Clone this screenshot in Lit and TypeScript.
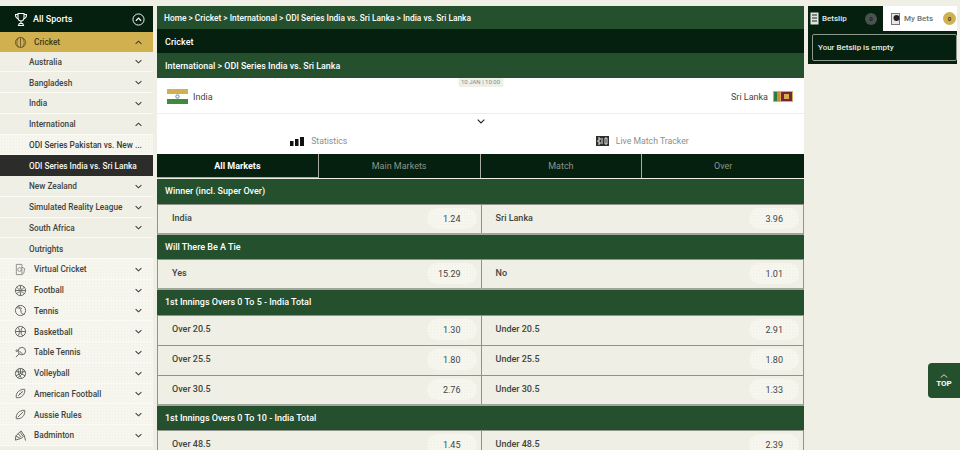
import { LitElement, html, css, svg } from "lit";
import { customElement } from "lit/decorators.js";

const chevDown = html`<svg class="chev" viewBox="0 0 8 5" width="7" height="5"><path d="M.7.8 4 4l3.300-3.200" fill="none" stroke="#3c3f3c" stroke-width="1.200"/></svg>`;
const chevUp = html`<svg class="chev" viewBox="0 0 8 5" width="7" height="5"><path d="M.7 4.200 4 1l3.300 3.200" fill="none" stroke="#3c3f3c" stroke-width="1.200"/></svg>`;

const ic = (body: unknown) => html`<svg class="sport" viewBox="0 0 14 14" width="13" height="13" fill="none" stroke="#5b605a" stroke-width="1">${body}</svg>`;
const icons: Record<string, unknown> = {
  cricket: svg`<circle cx="7" cy="7" r="5.500" stroke="#6b5a2c"/><path d="M7 1.500v11M5 2a8 8 0 0 0 0 10M9 2a8 8 0 0 1 0 10" stroke="#6b5a2c"/>`,
  virtual: svg`<path d="M2.500 1.500h6v11h-6zM8.500 4.500l3 1.500-1 5-2 1.500" stroke="#8a8d85"/><circle cx="6" cy="7" r="2" stroke="#8a8d85"/>`,
  football: svg`<circle cx="7" cy="7" r="5.500"/><path d="M7 1.500v3.500M1.500 7H12.500M7 9v3.500M3 3.500 5 5.500h4l2-2M3 10.500 5 8.500h4l2 2"/>`,
  tennis: svg`<circle cx="7" cy="7" r="5.500"/><path d="M2.500 4c3 0 5 1 5 3.500s1.500 4 4 3.500M5 1.800c0 2 2 2.500 3.500 3"/>`,
  basketball: svg`<circle cx="7" cy="7" r="5.500"/><path d="M1.500 7h11M7 1.500v0M4 2.300c2.500 2.500 2.500 7 0 9.400M9.500 2.200a6 6 0 0 0-2 4.800 6 6 0 0 0 2 4.800"/>`,
  tabletennis: svg`<circle cx="8.500" cy="5.500" r="4"/><path d="M5.500 8.500 2 12M6 5.500l3 3"/><circle cx="3" cy="5" r=".9"/>`,
  volleyball: svg`<circle cx="7" cy="7" r="5.500"/><path d="M7 7V1.500M7 7l-5 2.500M7 7l5 2.500M4.500 2.200C4 5 5 8 8 11.800M9.500 2.200C10 5 9.500 8 4 11.500M2 5c3 0 6 1 10 0"/>`,
  american: svg`<path d="M2.500 11.500C1.500 7 5.500 2 11.500 2.500 12.500 7.500 8 12.500 2.500 11.500Z"/><path d="M4.500 9.500 9.500 4.500M6 6.500l1.500 1.500M7.500 5l1.500 1.500"/>`,
  aussie: svg`<path d="M2.500 11.500C1.500 7 5.500 2 11.500 2.500 12.500 7.500 8 12.500 2.500 11.500Z"/><path d="M4 10 10 4"/>`,
  badminton: svg`<path d="M2 7.500 7.500 2 11 7l-3.500 3.500ZM2 7.500 1.500 12l5-1.500M11 7l1.500 5.500"/><path d="M4.500 5l3.500 4M6.500 3.500l3 4"/>`,
};

const leagues: [string, "down" | "up" | "none", string?][] = [
  ["Australia", "down"], ["Bangladesh", "down"], ["India", "down"], ["International", "up"],
  ["ODI Series Pakistan vs. New ...", "none", "leaf"], ["ODI Series India vs. Sri Lanka", "none", "active"],
  ["New Zealand", "down"], ["Simulated Reality League", "down"], ["South Africa", "down"], ["Outrights", "none"],
];
const sports: [string, string][] = [
  ["Virtual Cricket", "virtual"], ["Football", "football"], ["Tennis", "tennis"], ["Basketball", "basketball"],
  ["Table Tennis", "tabletennis"], ["Volleyball", "volleyball"], ["American Football", "american"],
  ["Aussie Rules", "aussie"], ["Badminton", "badminton"],
];
const markets: { title: string; rows: [string, string, string, string][] }[] = [
  { title: "Winner (incl. Super Over)", rows: [["India", "1.24", "Sri Lanka", "3.96"]] },
  { title: "Will There Be A Tie", rows: [["Yes", "15.29", "No", "1.01"]] },
  { title: "1st Innings Overs 0 To 5 - India Total", rows: [
    ["Over 20.5", "1.30", "Under 20.5", "2.91"], ["Over 25.5", "1.80", "Under 25.5", "1.80"], ["Over 30.5", "2.76", "Under 30.5", "1.33"]] },
  { title: "1st Innings Overs 0 To 10 - India Total", rows: [["Over 48.5", "1.45", "Under 48.5", "2.39"]] },
];

@customElement("app-root")
export class AppRoot extends LitElement {
  static styles = css`
    :host { display: block; height: 450px; overflow: hidden; background: #efefe5; font-family: "Roboto", "Noto Sans", sans-serif; font-size: 9px; color: #3a3d3a; }
    .page { display: grid; grid-template-columns: 153px 647px 149px; column-gap: 4px; padding-top: 6px; }
    .side { display: flex; flex-direction: column; }
    .all { height: 26px; background: #05200e; color: #fff; display: flex; align-items: center; padding: 0 8px 0 14px; font-size: 9px; font-weight: 500; box-sizing: border-box; }
    .all .trophy { margin-right: 5px; }
    .all .lbl { flex: 1; }
    .row { height: 20.750px; box-sizing: border-box; display: flex; align-items: center; padding-top: 1px; padding-right: 11px; border-bottom: 1px solid #fbfbf6; font-size: 8.250px; font-weight: 500; color: #3f4540; flex: none; }
    .row .name { flex: 1; white-space: nowrap; }
    .row.lg { padding-left: 29px; }
    .row.sp, .row.leaf { background: #f6f6ef radial-gradient(#efefe6 .6px, transparent .7px) 0 0 / 3px 3px; }
    .row.sp { padding-left: 14px; }
    .row.sp .sport { margin-right: 7px; flex: none; }
    .row.cur { background: #d1b04f; color: #3c3a1f; border-bottom: 0; height: 19.500px; }
    .row.leaf { color: #3a3d3a; }
    .row.active { background: #2c2c2a; color: #f8f8f0; border-bottom: 0; }
    .col { display: flex; flex-direction: column; }
    .bar { background: #25502e; color: #fff; display: flex; align-items: center; box-sizing: border-box; padding-left: 8px; font-weight: 500; white-space: pre; }
    .crumb { height: 23px; padding-left: 7px; font-size: 8.350px; }
    .dark { height: 24px; background: #05200e; font-size: 9px; padding-top: 1px; }
    .path { height: 25px; font-size: 8.900px; padding-top: 1px; }
    .match { height: 36px; background: #fff; position: relative; display: flex; align-items: center; justify-content: space-between; padding: 2px 11px 0 10px; border-bottom: 1px solid #eeeeea; box-sizing: border-box; font-size: 9px; color: #444; }
    .team { display: flex; align-items: center; gap: 5px; }
    .date { position: absolute; top: 0; left: 50%; transform: translateX(-50%); background: #efefe9; color: #8a8a85; font-size: 6px; line-height: 8px; padding: 0 3px 1px; border-radius: 0 0 2px 2px; white-space: nowrap; }
    .info { height: 40px; background: #fff; display: flex; flex-direction: column; }
    .info .chv { height: 14px; display: flex; align-items: center; justify-content: center; }
    .info .links { flex: 1; display: grid; grid-template-columns: 1fr 1fr; }
    .link { display: flex; align-items: center; justify-content: center; gap: 7px; color: #8d8f8a; font-size: 8.700px; }
    .tabs { height: 24px; background: #05200e; display: grid; grid-template-columns: repeat(4, 1fr); }
    .tab { display: flex; align-items: center; justify-content: center; color: #8b968c; font-size: 9px; border-right: 1px solid #a8aca4; }
    .tab:last-child { border-right: 0; }
    .tab.on { color: #fff; font-weight: 700; border-bottom: 1.500px solid #c9a94b; }
    .mhead { height: 25.500px; background: #25502e; color: #fff; font-weight: 500; font-size: 9px; display: flex; align-items: center; padding-left: 8px; border-bottom: 1px solid #8f938b; box-sizing: border-box; margin-top: 1px; flex: none; }
    .mkt { display: flex; flex-direction: column; }
    .mkt + .mkt .mhead { margin-top: 0; }
    .mrow { display: grid; grid-template-columns: 1fr 1fr; height: 30px; box-sizing: border-box; border: 1px solid #8f938b; border-top: 0; border-bottom: 1.500px solid #8f938b; flex: none; }
    .mkt .mrow:last-child { border-bottom: 2px solid #a2a59c; }
    .cell { display: flex; align-items: center; justify-content: space-between; padding: 0 4px 1px 14px; font-size: 9px; font-weight: 500; color: #3f4540; }
    .cell + .cell { border-left: 1px solid #8f938b; }
    .odd { width: 50px; height: 21px; border-radius: 11px; background: #f6f6ef radial-gradient(#efefe6 .6px, transparent .7px) 0 0 / 3px 3px; display: flex; align-items: center; justify-content: flex-end; padding-right: 16px; box-sizing: border-box; font-size: 9px; font-weight: 400; color: #444; padding-top: 1px; }
    .cell span:first-child { margin-top: -1px; }
    .slip { display: flex; flex-direction: column; }
    .stabs { height: 25px; display: grid; grid-template-columns: 75px 1fr; }
    .stab { display: flex; align-items: center; padding: 0 1px 0 2px; gap: 3px; font-size: 8px; font-weight: 500; }
    .stab.a { background: #05200e; color: #e6ebe6; }
    .stab.b { background: #fff; color: #6d726d; padding-left: 8px; }
    .stab .t { flex: 1; }
    .badge { width: 12px; height: 12px; border-radius: 50%; display: flex; align-items: center; justify-content: center; font-size: 6px; font-weight: 700; flex: none; }
    .a .badge { background: #4a524b; color: #1c241d; margin-right: 5px; }
    .b .badge { background: #d1b04f; color: #3c3a1f; width: 13px; height: 13px; }
    .sbody { height: 33px; background: #05200e; padding: 3px 0 0 4px; box-sizing: border-box; display: flex; }
    .empty { flex: 1; border: 1px solid #8d978e; border-radius: 2px; color: #e6ebe6; display: flex; align-items: center; padding-left: 5px; font-size: 8px; font-weight: 500; height: 27px; box-sizing: border-box; }
    .top { position: absolute; left: 928px; top: 363px; width: 36px; height: 35px; background: #25502e; border-radius: 4px 0 0 4px; color: #fff; font-size: 8px; font-weight: 700; display: flex; flex-direction: column; align-items: center; justify-content: center; gap: 1px; padding-right: 4px; box-sizing: border-box; }
  `;

  render() {
    return html`
      <div class="page">
        <nav class="side">
          <div class="all">
            <svg class="trophy" viewBox="0 0 14 15" width="14" height="15" fill="none" stroke="#fff" stroke-width="1.100"><path d="M4 1.500h6v4c0 2-1 3.500-3 3.500S4 7.500 4 5.500zM4 2.500H1.500c0 2.500 1 4 3 4.300M10 2.500h2.500c0 2.500-1 4-3 4.300M7 9v2.500M4.500 13.500h5l-.8-2H5.300z"/></svg>
            <span class="lbl">All Sports</span>
            <svg viewBox="0 0 14 14" width="13" height="13" fill="none" stroke="#fff"><circle cx="7" cy="7" r="6"/><path d="M4.200 8.300 7 5.500l2.800 2.800" stroke-width="1.300"/></svg>
          </div>
          <div class="row sp cur">${ic(icons.cricket)}<span class="name">Cricket</span>${chevUp}</div>
          ${leagues.map(([n, c, k]) => html`<div class="row lg ${k ?? ""}"><span class="name">${n}</span>${c === "down" ? chevDown : c === "up" ? chevUp : ""}</div>`)}
          ${sports.map(([n, i]) => html`<div class="row sp">${ic(icons[i])}<span class="name">${n}</span>${chevDown}</div>`)}
        </nav>
        <main class="col">
          <div class="bar crumb">Home &gt; Cricket &gt; International &gt; ODI Series India vs. Sri Lanka &gt; India vs. Sri Lanka</div>
          <div class="bar dark">Cricket</div>
          <div class="bar path">International &gt; ODI Series India vs. Sri Lanka</div>
          <div class="match">
            <span class="date">10 JAN | 10:00</span>
            <div class="team">
              <svg width="21" height="15" viewBox="0 0 21 15"><rect width="21" height="5" fill="#d1b04f"/><rect y="5" width="21" height="5" fill="#fff"/><rect y="10" width="21" height="5" fill="#3f8a3c"/><circle cx="10.500" cy="7.500" r="1.700" fill="none" stroke="#5f7fa8"/></svg>
              <span>India</span>
            </div>
            <div class="team">
              <span>Sri Lanka</span>
              <svg width="20" height="11" viewBox="0 0 20 11"><rect width="20" height="11" fill="#d1b04f"/><rect x="1" y="1" width="3" height="9" fill="#2f7a3f"/><rect x="4" y="1" width="3" height="9" fill="#d68a2f"/><rect x="8" y="1" width="11" height="9" fill="#7a2340"/><rect x="11" y="3" width="5" height="5" fill="#d1b04f"/></svg>
            </div>
          </div>
          <div class="info">
            <div class="chv"><svg viewBox="0 0 8 5" width="8" height="5"><path d="M.7.700 4 4l3.300-3.300" fill="none" stroke="#222" stroke-width="1.100"/></svg></div>
            <div class="links">
              <div class="link"><svg width="14" height="9" viewBox="0 0 14 9"><rect y="4" width="3.500" height="5" fill="#111"/><rect x="5" y="2" width="3.500" height="7" fill="#111"/><rect x="10" width="4" height="9" fill="#111"/></svg>Statistics</div>
              <div class="link"><svg width="13" height="10" viewBox="0 0 13 10"><rect width="13" height="10" fill="#2c2f2c"/><path d="M2 2h2v2H2v2h2v2H2M6 2v6M9 2h2v6H9z" fill="none" stroke="#e5e5e0"/></svg>Live Match Tracker</div>
            </div>
          </div>
          <div class="tabs">
            <div class="tab on">All Markets</div><div class="tab">Main Markets</div><div class="tab">Match</div><div class="tab">Over</div>
          </div>
          ${markets.map((m) => html`
            <section class="mkt">
              <div class="mhead">${m.title}</div>
              ${m.rows.map((r) => html`<div class="mrow">
                <div class="cell"><span>${r[0]}</span><span class="odd">${r[1]}</span></div>
                <div class="cell"><span>${r[2]}</span><span class="odd">${r[3]}</span></div>
              </div>`)}
            </section>`)}
        </main>
        <aside class="slip">
          <div class="stabs">
            <div class="stab a">
              <svg width="9" height="13" viewBox="0 0 9 13"><rect x=".5" y=".5" width="8" height="12" fill="#dfe3dd"/><path d="M2 3h5M2 6h5M2 9h5" stroke="#222" stroke-width="1.200"/></svg>
              <span class="t">Betslip</span><span class="badge">0</span>
            </div>
            <div class="stab b">
              <svg width="10" height="12" viewBox="0 0 10 12"><rect x=".5" y=".5" width="8" height="11" fill="#e8e8e2" stroke="#777"/><circle cx="5.500" cy="5" r="3" fill="#222"/></svg>
              <span class="t">My Bets</span><span class="badge">0</span>
            </div>
          </div>
          <div class="sbody"><div class="empty">Your Betslip is empty</div></div>
        </aside>
      </div>
      <div class="top">
        <svg width="8" height="4" viewBox="0 0 8 4"><path d="M.7 3.500 4 .7l3.300 2.800" fill="none" stroke="#cfd8cf"/></svg>
        <span>TOP</span>
      </div>
    `;
  }
}
